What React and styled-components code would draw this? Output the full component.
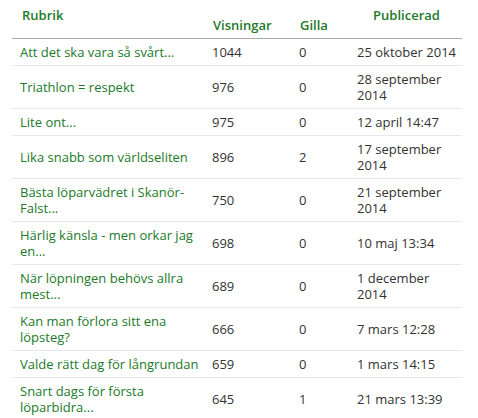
import React from "react";
import styled, { createGlobalStyle } from "styled-components";

const GlobalStyle = createGlobalStyle`
  body {
    margin: 0;
    background: #ffffff;
    font-family: "Open Sans", "Liberation Sans", sans-serif;
  }
`;

const Wrapper = styled.div`
  padding: 0 16px 0 12px;
`;

const Table = styled.table`
  width: 450px;
  border-collapse: collapse;
  table-layout: fixed;
  font-size: 13px;
  line-height: 16px;
  color: #333;
`;

const HeadCell = styled.th`
  height: 26px;
  padding: ${(p) => (p.$top ? "7px 8px 5px 10px" : "7px 4px 5px 9px")};
  text-align: ${(p) => (p.$center ? "center" : "left")};
  vertical-align: ${(p) => (p.$top ? "top" : "bottom")};
  color: #217a2a;
  font-weight: 600;
  border-bottom: 1px solid #ababab;
`;

const Row = styled.tr`
  border-bottom: 1px solid #e8e8e8;
`;

const Cell = styled.td`
  padding: 5px 4px 5px 8px;
  vertical-align: middle;
`;

const TitleLink = styled.a`
  color: #217a2a;
  text-decoration: none;
`;

const posts = [
  ["Att det ska vara så svårt...", 1044, 0, "25 oktober 2014"],
  ["Triathlon = respekt", 976, 0, "28 september 2014"],
  ["Lite ont...", 975, 0, "12 april 14:47"],
  ["Lika snabb som världseliten", 896, 2, "17 september 2014"],
  ["Bästa löparvädret i Skanör-Falst...", 750, 0, "21 september 2014"],
  ["Härlig känsla - men orkar jag en...", 698, 0, "10 maj 13:34"],
  ["När löpningen behövs allra mest...", 689, 0, "1 december 2014"],
  ["Kan man förlora sitt ena löpsteg?", 666, 0, "7 mars 12:28"],
  ["Valde rätt dag för långrundan", 659, 0, "1 mars 14:15"],
  ["Snart dags för första löparbidra...", 645, 1, "21 mars 13:39"],
];

export default function App() {
  return (
    <Wrapper>
      <GlobalStyle />
      <Table>
        <colgroup>
          <col style={{ width: 192 }} />
          <col style={{ width: 87 }} />
          <col style={{ width: 58 }} />
          <col style={{ width: 113 }} />
        </colgroup>
        <thead>
          <tr>
            <HeadCell $top>Rubrik</HeadCell>
            <HeadCell>Visningar</HeadCell>
            <HeadCell>Gilla</HeadCell>
            <HeadCell $top $center>Publicerad</HeadCell>
          </tr>
        </thead>
        <tbody>
          {posts.map(([title, views, likes, date]) => (
            <Row key={title}>
              <Cell>
                <TitleLink href="#">{title}</TitleLink>
              </Cell>
              <Cell>{views}</Cell>
              <Cell>{likes}</Cell>
              <Cell>{date}</Cell>
            </Row>
          ))}
        </tbody>
      </Table>
    </Wrapper>
  );
}
